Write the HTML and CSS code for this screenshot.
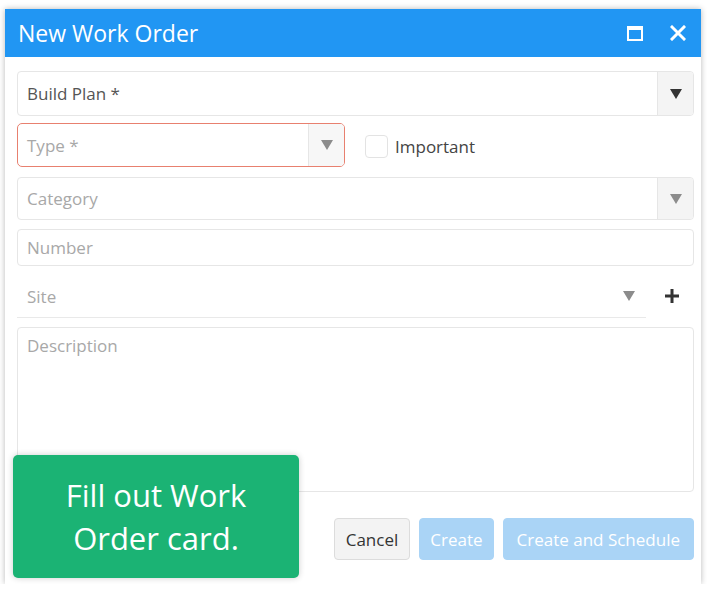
FILE: index.html
```html
<!DOCTYPE html>
<html lang="en">
<head>
    <meta charset="UTF-8">
    <title>New Work Order</title>
<link rel="stylesheet" href="styles.css">
</head>
<body>
	<div class="dialog">
		<div class="dialog-head">
			<h2>New Work Order</h2>
			<span class="btn-max"></span>
			<svg class="btn-close" width="16" height="16" viewBox="0 0 16 16"><path d="M2 2L14 14M14 2L2 14" stroke="#fff" stroke-width="3" stroke-linecap="square"/></svg>
		</div>
		<div class="dialog-body">
			<div class="field select f-plan">
				<span class="val">Build Plan *</span>
				<span class="drop"><i class="arrow dark"></i></span>
			</div>
			<div class="row-type">
				<div class="field select f-type invalid">
					<span class="ph">Type *</span>
					<span class="drop"><i class="arrow"></i></span>
				</div>
				<label class="check"><span class="box"></span>Important</label>
			</div>
			<div class="field select f-cat">
				<span class="ph">Category</span>
				<span class="drop"><i class="arrow"></i></span>
			</div>
			<div class="field f-num">
				<span class="ph">Number</span>
			</div>
			<div class="row-site">
				<div class="site">
					<span class="ph">Site</span>
					<i class="arrow"></i>
				</div>
				<svg class="plus" width="16" height="16" viewBox="0 0 16 16"><path d="M8 1V15M1 8H15" stroke="#333" stroke-width="3"/></svg>
			</div>
			<div class="field f-desc">
				<span class="ph">Description</span>
			</div>
			<div class="actions">
				<button class="btn cancel">Cancel</button>
				<button class="btn primary">Create</button>
				<button class="btn primary wide">Create and Schedule</button>
			</div>
		</div>
		<div class="tip">Fill out Work<br>Order card.</div>
	</div>
</body>
</html>
```

FILE: styles.css
```css
*{padding:0;margin:0;box-sizing:border-box;}
body{
	background:#fff;
	font-family:"Open Sans","Noto Sans",sans-serif;
}
.dialog{
	position:relative;
	width:696px;
	height:575px;
	margin:9px 0 0 5px;
	background:#fff;
	box-shadow:0 0 6px rgba(0,0,0,0.28);
}
.dialog-head{
	height:48px;
	background:#2196f3;
	display:flex;
	align-items:center;
	padding:0 15px 0 13px;
	color:#fff;
}
.dialog-head h2{
	flex:1;
	font-weight:normal;
	font-size:23px;
}
.btn-max{
	width:16px;
	height:15px;
	border:2px solid #fff;
	border-top-width:4px;
	margin-right:27px;
}
.dialog-body{
	padding:14px 7px 0 12px;
}
.field{
	display:flex;
	align-items:center;
	border:1px solid #e6e6e6;
	border-radius:4px;
	font-size:17px;
	padding-left:9px;
	overflow:hidden;
}
.val{flex:1;color:#555;}
.ph{flex:1;color:#a8a8a8;}
.drop{
	width:36px;
	align-self:stretch;
	background:#f4f4f4;
	border-left:1px solid #e6e6e6;
	display:flex;
	align-items:center;
	justify-content:center;
}
.arrow{
	width:0;
	height:0;
	border-left:6px solid transparent;
	border-right:6px solid transparent;
	border-top:10px solid #8c8c8c;
}
.arrow.dark{border-top-color:#333;}
.f-plan{height:45px;}
.row-type{
	display:flex;
	align-items:center;
	margin-top:7px;
}
.f-type{
	width:328px;
	height:44px;
	border-radius:5px;
}
.f-type.invalid{border-color:#e8806f;}
.f-type .drop{background:#f7f7f7;}
.check{
	display:flex;
	align-items:center;
	margin-left:20px;
	font-size:17px;
	color:#444;
	padding-top:2px;
}
.check .box{
	width:23px;
	height:23px;
	border:1px solid #e3e3e3;
	border-radius:4px;
	margin-right:7px;
}
.f-cat{height:43px;margin-top:10px;}
.f-num{height:37px;margin-top:9px;}
.row-site{
	display:flex;
	align-items:center;
	height:52px;
}
.site{
	width:629px;
	height:52px;
	display:flex;
	align-items:center;
	padding:9px 11px 0 10px;
	border-bottom:1px solid #e9e9e9;
	font-size:17px;
}
.plus{margin-left:18px;margin-top:8px;}
.f-desc{
	height:165px;
	margin-top:9px;
	align-items:flex-start;
	padding-top:6px;
}
.actions{
	display:flex;
	justify-content:flex-end;
	gap:9px;
	margin-top:26px;
}
.btn{
	height:42px;
	padding:0 10px;
	border:1px solid #dcdcdc;
	border-radius:4px;
	background:#f3f3f3;
	color:#333;
	font-family:inherit;
	font-size:17px;
}
.btn.cancel{padding:0 11px;}
.btn.primary{
	border-color:#aad4f6;
	background:#aad4f6;
	color:#fff;
}
.btn.wide{padding:0 13px;}
.tip{
	position:absolute;
	left:8px;
	top:446px;
	width:286px;
	height:123px;
	border-radius:5px;
	background:#1bb374;
	box-shadow:0 0 6px rgba(0,0,0,0.2);
	color:#fff;
	font-size:31px;
	line-height:43px;
	text-align:center;
	padding-top:19px;
}
```
